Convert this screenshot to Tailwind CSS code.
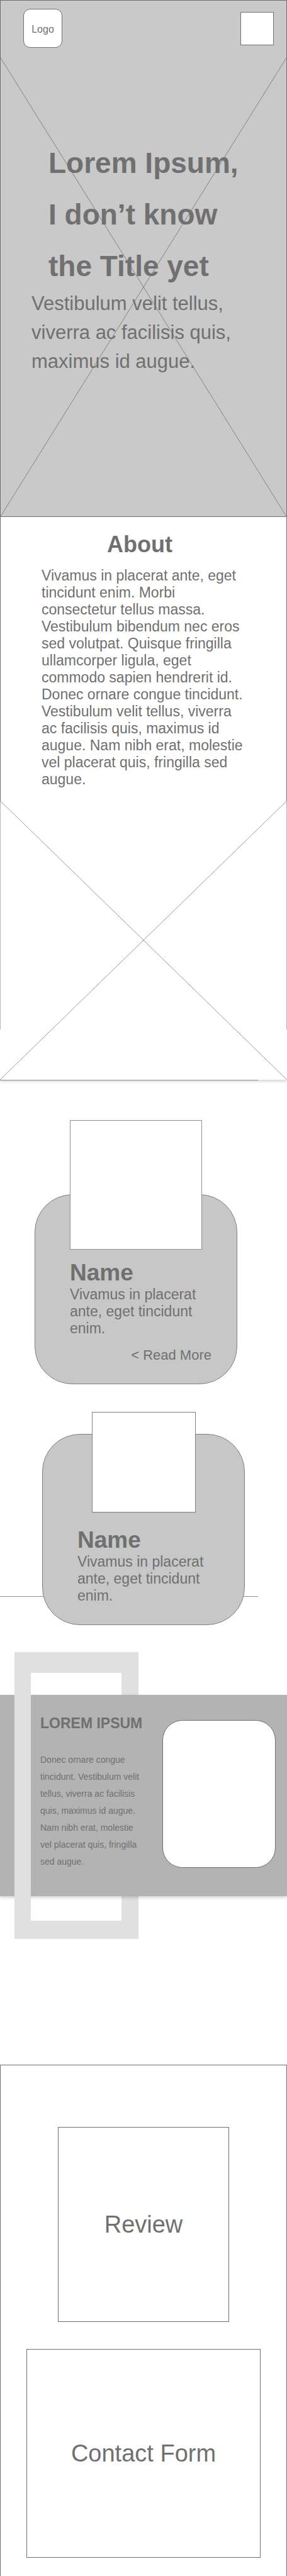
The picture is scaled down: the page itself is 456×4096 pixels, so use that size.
<!DOCTYPE html>
<html lang="en">
<head>
<meta charset="utf-8">
<meta name="viewport" content="width=device-width, initial-scale=1">
<title>Lorem Ipsum</title>
<script src="https://cdn.jsdelivr.net/npm/@tailwindcss/browser@4"></script>
</head>
<body class="bg-white font-['Liberation_Sans',Arial,sans-serif] text-[#707070]">

<!-- Hero -->
<section class="relative border border-[#707070] bg-[#c9c9c9] pt-[13px] pb-[223px]">
  <svg class="absolute inset-x-0 top-[91px] bottom-0 h-[calc(100%-91px)] w-full" viewBox="0 0 100 100" preserveAspectRatio="none" fill="none" stroke="#707070" aria-hidden="true">
    <path d="M0 0L100 100M100 0L0 100" stroke-width="0.8" vector-effect="non-scaling-stroke"/>
  </svg>
  <header class="relative flex items-center justify-between pr-5 pl-9">
    <a href="#" class="flex size-[62px] items-center justify-center rounded-[11px] border border-[#707070] bg-white pt-1 text-base">Logo</a>
    <button type="button" aria-label="Menu" class="size-[53px] border border-[#707070] bg-white"></button>
  </header>
  <h1 class="relative mt-[142px] pr-12 pl-[76px] text-[46px] leading-[82px] font-bold">Lorem Ipsum,<br>I don’t know<br>the Title yet</h1>
  <p class="relative -mt-1 pr-[72px] pl-[49px] text-[31px] leading-[46px]">Vestibulum velit tellus, viverra ac facilisis quis, maximus id augue.</p>
</section>

<!-- About -->
<section class="border-x border-[#707070] px-[65px] pt-6 pb-5">
  <h2 class="pr-3 text-center text-[36px] leading-10 font-bold">About</h2>
  <p class="mt-4 text-[23px] leading-[27px]">Vivamus in placerat ante, eget tincidunt enim. Morbi consectetur tellus massa. Vestibulum bibendum nec eros sed volutpat. Quisque fringilla ullamcorper ligula, eget commodo sapien hendrerit id. Donec ornare congue tincidunt. Vestibulum velit tellus, viverra ac facilisis quis, maximus id augue. Nam nibh erat, molestie vel placerat quis, fringilla sed augue.</p>
</section>

<!-- Picture placeholder -->
<div class="relative">
  <div class="h-[364px] border-x border-[#b7b7b7]"></div>
  <div class="h-20 bg-white shadow-[0_2px_5px_rgba(0,0,0,0.2)] [clip-path:inset(0_0_-12px_0)]"></div>
  <svg class="absolute inset-0 h-full w-full" viewBox="0 0 100 100" preserveAspectRatio="none" fill="none" stroke="#707070" aria-hidden="true">
    <path d="M0 0L100 100M100 0L0 100" stroke-width="0.7" vector-effect="non-scaling-stroke"/>
  </svg>
</div>

<!-- Team -->
<section class="relative flex w-9/10 flex-col border-y border-[#919191] pt-[181px]">
  <article class="ml-[55px] w-[322px] rounded-[60px] border border-[#808080] bg-[#c7c7c7] pr-10 pb-8 pl-[55px]">
    <div class="-mt-[119px] h-[206px] w-[210px] border border-[#909090] bg-white"></div>
    <h3 class="mt-[17px] text-[37px] leading-10 font-bold">Name</h3>
    <p class="mt-px text-[23px] leading-[27px]">Vivamus in placerat ante, eget tincidunt enim.</p>
    <a href="#" class="mt-[15px] block text-right text-[22px] leading-[27px]">&lt; Read More</a>
  </article>
  <article class="mt-[79px] -mb-[46px] ml-[67px] w-[322px] rounded-[60px] border border-[#808080] bg-[#c7c7c7] px-[55px] pb-8">
    <div class="mx-auto -mt-9 h-40 w-[165px] border border-[#808080] bg-white"></div>
    <h3 class="mt-6 text-[37px] leading-10 font-bold">Name</h3>
    <p class="mt-px text-[23px] leading-[27px]">Vivamus in placerat ante, eget tincidunt enim.</p>
  </article>
</section>

<!-- Feature band, threaded through a frame -->
<section class="relative mt-[88px] py-[68px]">
  <div class="absolute inset-y-0 left-[23px] w-[197px] border-t-[33px] border-r-[27px] border-b-[29px] border-[#e0e0e0]"></div>
  <div class="relative flex items-start justify-between bg-[#b3b3b3] pr-[18px] pl-16 shadow-[0_2px_5px_rgba(0,0,0,0.2)]">
    <div class="w-[168px] pt-8 pb-[41px]">
      <h2 class="text-[23px] leading-[27px] font-bold whitespace-nowrap">LOREM IPSUM</h2>
      <p class="mt-[31px] text-sm leading-[27px]">Donec ornare congue tincidunt. Vestibulum velit tellus, viverra ac facilisis quis, maximus id augue. Nam nibh erat, molestie vel placerat quis, fringilla sed augue.</p>
    </div>
    <div class="mt-10 h-[235px] w-[180px] rounded-[32px] border border-[#707070] bg-white"></div>
  </div>
  <div class="absolute inset-y-0 left-[23px] w-[26px] bg-[#e0e0e0]"></div>
</section>

<!-- Review and contact -->
<section class="mt-[200px] flex flex-col gap-[43px] border-x border-t border-[#707070] px-[41px] pt-[98px] pb-[30px]">
  <div class="mx-[50px] flex h-[310px] items-center justify-center border border-[#707070]">
    <h2 class="text-[38px] leading-10">Review</h2>
  </div>
  <div class="flex h-[332px] items-center justify-center border border-[#707070]">
    <h2 class="text-[38px] leading-10">Contact Form</h2>
  </div>
</section>
</body>
</html>
